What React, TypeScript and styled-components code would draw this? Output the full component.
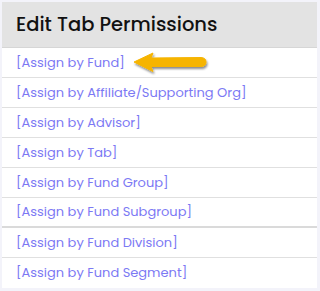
import * as React from "react";
import styled, { createGlobalStyle } from "styled-components";

const GlobalStyle = createGlobalStyle`
  html, body {
    margin: 0;
    padding: 0;
    background: #f3f3fa;
  }
`;

const Page = styled.div`
  padding: 2px 3px 3px 2px;
`;

const Panel = styled.div`
  background: #ffffff;
  font-family: "Poppins", "Inter", "DejaVu Sans", sans-serif;
`;

const Header = styled.div`
  background: #e3e3e3;
  height: 46px;
  display: flex;
  align-items: center;
  padding-left: 14px;
  border-bottom: 1px solid #d6d6d6;
  box-sizing: border-box;
`;

const Title = styled.h2`
  margin: 0;
  font-size: 19.5px;
  font-weight: 500;
  color: #111111;
`;

const Row = styled.div<{ $thick?: boolean }>`
  height: 30px;
  box-sizing: border-box;
  display: flex;
  align-items: center;
  gap: 7px;
  padding-left: 14px;
  border-bottom: ${(p) => (p.$thick ? "2px solid #dadada" : "1px solid #e0e0e0")};

  &:last-child {
    border-bottom: none;
  }
`;

const Link = styled.a`
  color: #7c79f4;
  font-size: 13px;
  text-decoration: none;
  cursor: pointer;
`;

const Arrow = () => (
  <svg width="78" height="26" viewBox="0 0 78 26">
    <defs>
      <filter id="sh" x="-10%" y="-30%" width="130%" height="180%">
        <feDropShadow dx="1" dy="2" stdDeviation="1" floodColor="#000" floodOpacity="0.45" />
      </filter>
    </defs>
    <path
      d="M2 12 L21 3 L19 8 L69 7.5 Q74 7.8 74 12 Q74 16.3 69 16.5 L19 16.5 L21 21.5 Z"
      fill="#f6b400"
      stroke="#f6b400"
      strokeWidth="1"
      strokeLinejoin="round"
      filter="url(#sh)"
    />
  </svg>
);

const items = [
  "Assign by Fund",
  "Assign by Affiliate/Supporting Org",
  "Assign by Advisor",
  "Assign by Tab",
  "Assign by Fund Group",
  "Assign by Fund Subgroup",
  "Assign by Fund Division",
  "Assign by Fund Segment",
];

const App: React.FC = () => {
  return (
    <Page>
      <GlobalStyle />
      <Panel>
        <Header>
          <Title>Edit Tab Permissions</Title>
        </Header>
        {items.map((label, i) => (
          <Row key={label} $thick={i === 5}>
            <Link>[{label}]</Link>
            {i === 0 && <Arrow />}
          </Row>
        ))}
      </Panel>
    </Page>
  );
};

export default App;
